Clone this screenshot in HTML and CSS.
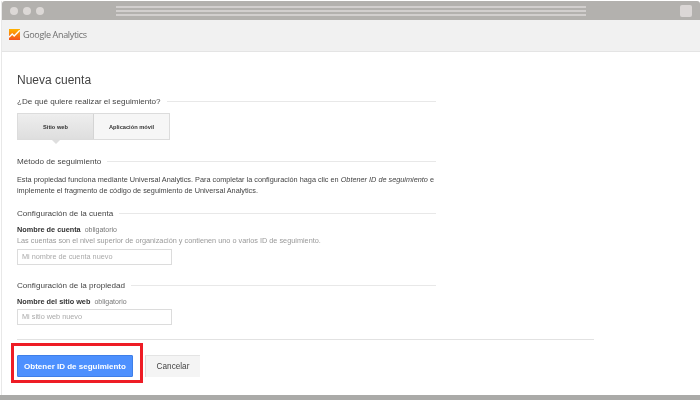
FILE: index.html
```html
<!DOCTYPE html>
<html lang="es">
<head>
<meta charset="utf-8">
<title>Google Analytics</title>
<link rel="stylesheet" href="styles.css">
</head>
<body>
<div class="window">
  <div class="chrome">
    <div class="dots"><span class="dot"></span><span class="dot"></span><span class="dot"></span></div>
    <div class="address"><span></span><span></span><span></span></div>
    <span class="square"></span>
  </div>
  <header class="topbar">
    <svg class="logo" width="11" height="11" viewBox="0 0 11 11">
      <defs><linearGradient id="g" x1="0" y1="0" x2="0" y2="1"><stop offset="0" stop-color="#ffb300"/><stop offset="1" stop-color="#f4511e"/></linearGradient></defs>
      <rect width="11" height="11" fill="url(#g)"/>
      <path d="M0 8.2 L3.2 5 L5.2 7 L10.8 1.2" fill="none" stroke="#fff" stroke-width="1.4"/>
    </svg>
    <span class="brand">Google Analytics</span>
  </header>
  <main class="content">
    <h1>Nueva cuenta</h1>
    <div class="narrow">
      <h2 class="rule first">¿De qué quiere realizar el seguimiento?</h2>
      <div class="tabs">
        <div class="tab active">Sitio web</div>
        <div class="tab">Aplicación móvil</div>
      </div>
      <h2 class="rule method">Método de seguimiento</h2>
      <p class="desc">Esta propiedad funciona mediante Universal Analytics. Para completar la configuración haga clic en <em>Obtener ID de seguimiento</em> e implemente el fragmento de código de seguimiento de Universal Analytics.</p>
      <h2 class="rule account">Configuración de la cuenta</h2>
      <div class="label">Nombre de cuenta <small>obligatorio</small></div>
      <div class="hint">Las cuentas son el nivel superior de organización y contienen uno o varios ID de seguimiento.</div>
      <div class="field">Mi nombre de cuenta nuevo</div>
      <h2 class="rule property">Configuración de la propiedad</h2>
      <div class="label">Nombre del sitio web <small>obligatorio</small></div>
      <div class="field tight">Mi sitio web nuevo</div>
    </div>
    <hr class="divider">
    <div class="actions">
      <div class="highlight"><button class="primary">Obtener ID de seguimiento</button></div>
      <button class="cancel">Cancelar</button>
    </div>
  </main>
</div>
<div class="bottom"></div>
</body>
</html>
```
FILE: styles.css
```css
* { box-sizing: border-box; }
html, body { margin: 0; padding: 0; background: #fff; }
body {
  width: 700px;
  height: 400px;
  overflow: hidden;
  display: flex;
  flex-direction: column;
  font-family: "Liberation Sans", Arial, sans-serif;
  color: #444;
  padding-top: 1px;
  filter: blur(0.3px);
}
.window {
  flex: 1;
  margin-left: 1px;
  border-left: 1px solid #e8e8e8;
  display: flex;
  flex-direction: column;
}
.chrome {
  height: 19px;
  flex: none;
  background: #b3b1ae;
  border-radius: 3px 3px 0 0;
  display: flex;
  align-items: center;
  padding: 0 8px 0 8px;
}
.dots { display: flex; gap: 5px; width: 106px; }
.dot { width: 8px; height: 8px; border-radius: 50%; background: #dcd8d6; }
.address {
  width: 470px;
  display: flex;
  flex-direction: column;
  gap: 2px;
}
.address span { height: 2px; background: #d2cfce; }
.square {
  width: 12px;
  height: 12px;
  margin-left: auto;
  border-radius: 2px;
  background: #dbd7d6;
}
.topbar {
  height: 32px;
  flex: none;
  background: #f1f1f1;
  border-bottom: 1px solid #e4e4e4;
  display: flex;
  align-items: center;
  padding: 0 0 3px 7px;
  gap: 3px;
}
.logo { flex: none; }
.brand { font-size: 9px; color: #6e6e6e; font-family: "Open Sans", sans-serif; letter-spacing: -0.33px; }
.content { flex: 1; padding: 21px 0 0 15px; }
h1 { margin: 0; font-size: 12px; line-height: 15px; font-weight: 400; color: #444; }
.narrow { width: 419px; }
h2 { margin: 0; font-size: 8.1px; line-height: 11px; font-weight: 400; color: #444; }
.rule { display: flex; align-items: center; gap: 6px; }
.rule::after { content: ""; flex: 1; height: 1px; background: #e8e8e8; }
.first { margin-top: 8px; }
.tabs {
  display: flex;
  width: 153px;
  height: 27px;
  margin-top: 6px;
  border: 1px solid #dcdcdc;
}
.tab {
  flex: 1;
  display: flex;
  align-items: center;
  justify-content: center;
  font-size: 5.7px;
  font-weight: 700;
  color: #333;
  background: #f6f6f6;
}
.tab.active {
  position: relative;
  background: linear-gradient(#eeeeee, #dedede);
  border-right: 1px solid #d4d4d4;
}
.tab.active::after {
  content: "";
  position: absolute;
  left: 50%;
  bottom: -5px;
  margin-left: -4px;
  border-left: 4px solid transparent;
  border-right: 4px solid transparent;
  border-top: 4px solid #dedede;
}
.method { margin-top: 16px; }
.desc { margin: 7px 0 0; font-size: 7.3px; line-height: 11px; color: #444; }
.account { margin-top: 12px; }
.label { margin-top: 5px; font-size: 7.3px; line-height: 11px; font-weight: 700; color: #333; }
.label small { font-size: 7px; font-weight: 400; color: #777; margin-left: 2px; }
.hint { font-size: 7.3px; line-height: 11px; color: #999; }
.field {
  width: 155px;
  height: 16px;
  margin-top: 3px;
  border: 1px solid #dcdcdc;
  font-size: 7.3px;
  line-height: 14px;
  padding-left: 4px;
  color: #aaa;
}
.field.tight { margin-top: 2px; }
.property { margin-top: 15px; }
.divider {
  width: 577px;
  height: 1px;
  margin: 14px 0 0;
  border: 0;
  background: #e2e2e2;
}
.actions {
  display: flex;
  align-items: flex-start;
  gap: 2px;
  margin: 3px 0 0 -6px;
}
.highlight {
  border: 3px solid #ee1c25;
  padding: 9px 7px 3px 3px;
  height: 40px;
  width: 132px;
}
button { font-family: inherit; padding: 0; margin: 0; cursor: pointer; }
.primary {
  display: block;
  width: 116px;
  height: 22px;
  border: 1px solid #3f7fe8;
  border-radius: 1px;
  background: #4d90fe;
  color: #fff;
  font-size: 8px;
  font-weight: 700;
}
.cancel {
  width: 55px;
  height: 22px;
  margin-top: 12px;
  border: 0;
  border-left: 1px solid #dcdcdc;
  border-top: 1px solid #e4e4e4;
  background: #f4f4f4;
  color: #444;
  font-size: 8.2px;
  font-weight: 400;
}
.bottom { flex: none; height: 5px; background: #aaaaa8; }
```
